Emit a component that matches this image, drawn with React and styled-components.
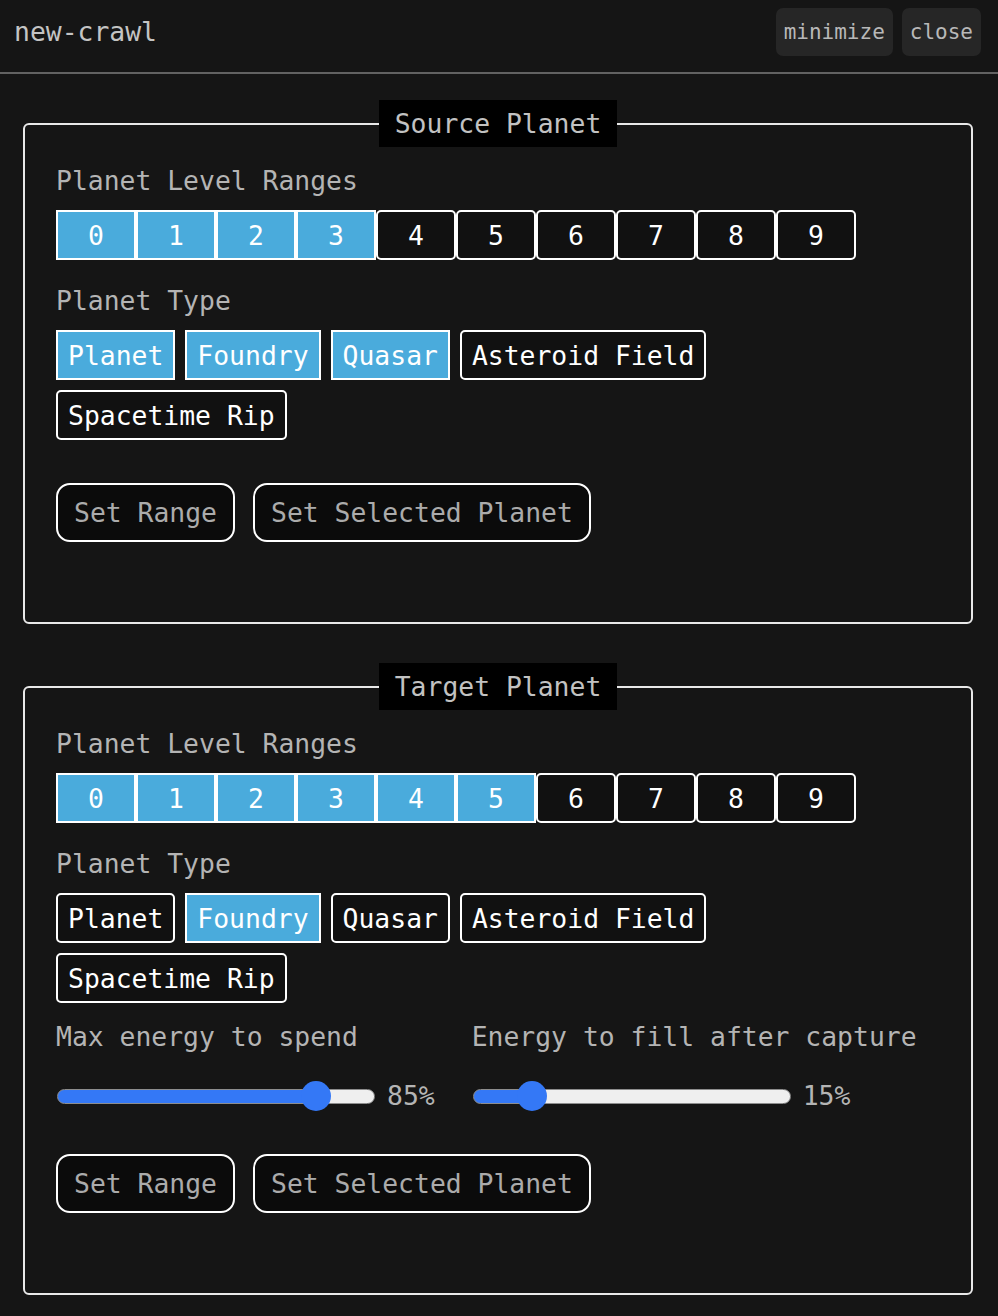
import styled, { createGlobalStyle } from 'styled-components';
import { useState } from 'react';

const LEVELS = [0, 1, 2, 3, 4, 5, 6, 7, 8, 9];
const TYPES = ['Planet', 'Foundry', 'Quasar', 'Asteroid Field', 'Spacetime Rip'];

const GlobalStyle = createGlobalStyle`
  body {
    margin: 0;
    background: #151515;
    font-family: "DejaVu Sans Mono", "Liberation Mono", monospace;
    font-size: 26.4px;
    color: #bbbbbb;
  }
`;

function Slider({ label, value, onChange }) {
  return (
    <SliderBlock>
      <Label>{label}</Label>
      <SliderRow>
        <Range
          type="range"
          min={0}
          max={100}
          value={value}
          $fill={15 + (value / 100) * 286}
          onChange={(e) => onChange(Number(e.target.value))}
        />
        <Percent>{value}%</Percent>
      </SliderRow>
    </SliderBlock>
  );
}

function PlanetPanel({ title, maxLevel, selectedTypes, withEnergy }) {
  const [ spend, setSpend ] = useState(85);
  const [ fill, setFill ] = useState(15);
  return (
    <Panel>
      <Legend>{title}</Legend>
      <Label>Planet Level Ranges</Label>
      <LevelRow>
        {LEVELS.map((lvl) => (
          <LevelButton key={lvl} $active={lvl <= maxLevel}>{lvl}</LevelButton>
        ))}
      </LevelRow>
      <Label $top>Planet Type</Label>
      <TypeWrap>
        {TYPES.map((type) => (
          <TypeButton key={type} $active={selectedTypes.includes(type)}>{type}</TypeButton>
        ))}
      </TypeWrap>
      {withEnergy && (
        <Energy>
          <Slider label="Max energy to spend" value={spend} onChange={setSpend} />
          <Slider label="Energy to fill after capture" value={fill} onChange={setFill} />
        </Energy>
      )}
      <Actions>
        <ActionButton>Set Range</ActionButton>
        <ActionButton>Set Selected Planet</ActionButton>
      </Actions>
    </Panel>
  );
}

export default function App() {
  return (
    <>
      <GlobalStyle />
      <Header>
        <Title>new-crawl</Title>
        <WindowControls>
          <ControlButton>minimize</ControlButton>
          <ControlButton>close</ControlButton>
        </WindowControls>
      </Header>
      <Main>
        <PlanetPanel title="Source Planet" maxLevel={3} selectedTypes={['Planet', 'Foundry', 'Quasar']} />
        <PlanetPanel title="Target Planet" maxLevel={5} selectedTypes={['Foundry']} withEnergy />
      </Main>
    </>
  );
}

const Header = styled.header`
  display: flex;
  align-items: center;
  justify-content: space-between;
  height: 64px;
  padding: 0 17px 8px 14px;
  border-bottom: 2px solid #626262;
`;

const Title = styled.div`
  color: #c4c4c4;
  line-height: 32px;
`;

const WindowControls = styled.div`
  display: flex;
  gap: 9px;
`;

const ControlButton = styled.button`
  height: 48px;
  padding: 0 8px;
  border: none;
  border-radius: 7px;
  background: #262626;
  color: #b8b8b8;
  font-family: inherit;
  font-size: 21px;
`;

const Main = styled.main`
  display: flex;
  flex-direction: column;
  gap: 39px;
  padding: 26px 25px 24px 23px;
`;

const Panel = styled.fieldset`
  margin: 0;
  min-width: 0;
  padding: 18px 31px 80px 31px;
  border: 2px solid #e8e8e8;
  border-radius: 6px;
`;

const Legend = styled.legend`
  margin: 0 auto;
  padding: 0 16px;
  line-height: 47px;
  background: #000000;
  color: #c2c2c2;
`;

const Label = styled.div`
  line-height: 32px;
  margin-top: ${(p) => (p.$top ? '25px' : '0')};
  margin-bottom: 13px;
  color: #b4b4b4;
  white-space: nowrap;
`;

const LevelRow = styled.div`
  display: flex;
`;

const LevelButton = styled.div`
  box-sizing: border-box;
  width: 80px;
  height: 50px;
  display: flex;
  align-items: center;
  justify-content: center;
  border: 2px solid #ffffff;
  border-radius: ${(p) => (p.$active ? '0' : '5px')};
  background: ${(p) => (p.$active ? '#4aabdc' : '#111111')};
  color: #ffffff;
`;

const TypeWrap = styled.div`
  display: flex;
  flex-wrap: wrap;
  gap: 10px;
  max-width: 800px;
`;

const TypeButton = styled.div`
  box-sizing: border-box;
  height: 50px;
  display: flex;
  align-items: center;
  padding: 0 10px;
  border: 2px solid #ffffff;
  border-radius: ${(p) => (p.$active ? '0' : '5px')};
  background: ${(p) => (p.$active ? '#4aabdc' : '#111111')};
  color: #ffffff;
  white-space: nowrap;
`;

const Energy = styled.div`
  display: flex;
  gap: 37px;
  margin-top: 18px;
`;

const SliderBlock = styled.div`
  display: flex;
  flex-direction: column;
`;

const SliderRow = styled.div`
  display: flex;
  align-items: center;
  gap: 12px;
  height: 30px;
  margin-top: 15px;
`;

const Range = styled.input`
  -webkit-appearance: none;
  appearance: none;
  width: 318px;
  height: 30px;
  margin: 0 0 0 1px;
  background: transparent;

  &::-webkit-slider-runnable-track {
    height: 15px;
    box-sizing: border-box;
    border-radius: 8px;
    border: 1px solid #8d8d8d;
    background: linear-gradient(to right, #3478f6 ${(p) => p.$fill}px, #efefef ${(p) => p.$fill}px);
  }

  &::-webkit-slider-thumb {
    -webkit-appearance: none;
    appearance: none;
    width: 30px;
    height: 30px;
    margin-top: -8.5px;
    border: none;
    border-radius: 50%;
    background: #3478f6;
  }
`;

const Percent = styled.span`
  color: #b4b4b4;
  line-height: 30px;
`;

const Actions = styled.div`
  display: flex;
  gap: 18px;
  margin-top: 43px;
`;

const ActionButton = styled.button`
  box-sizing: border-box;
  height: 59px;
  padding: 0 16px;
  border: 2px solid #ffffff;
  border-radius: 14px;
  background: #0b0b0b;
  color: #ababab;
  font-family: inherit;
  font-size: 26.4px;
  white-space: nowrap;
`;
